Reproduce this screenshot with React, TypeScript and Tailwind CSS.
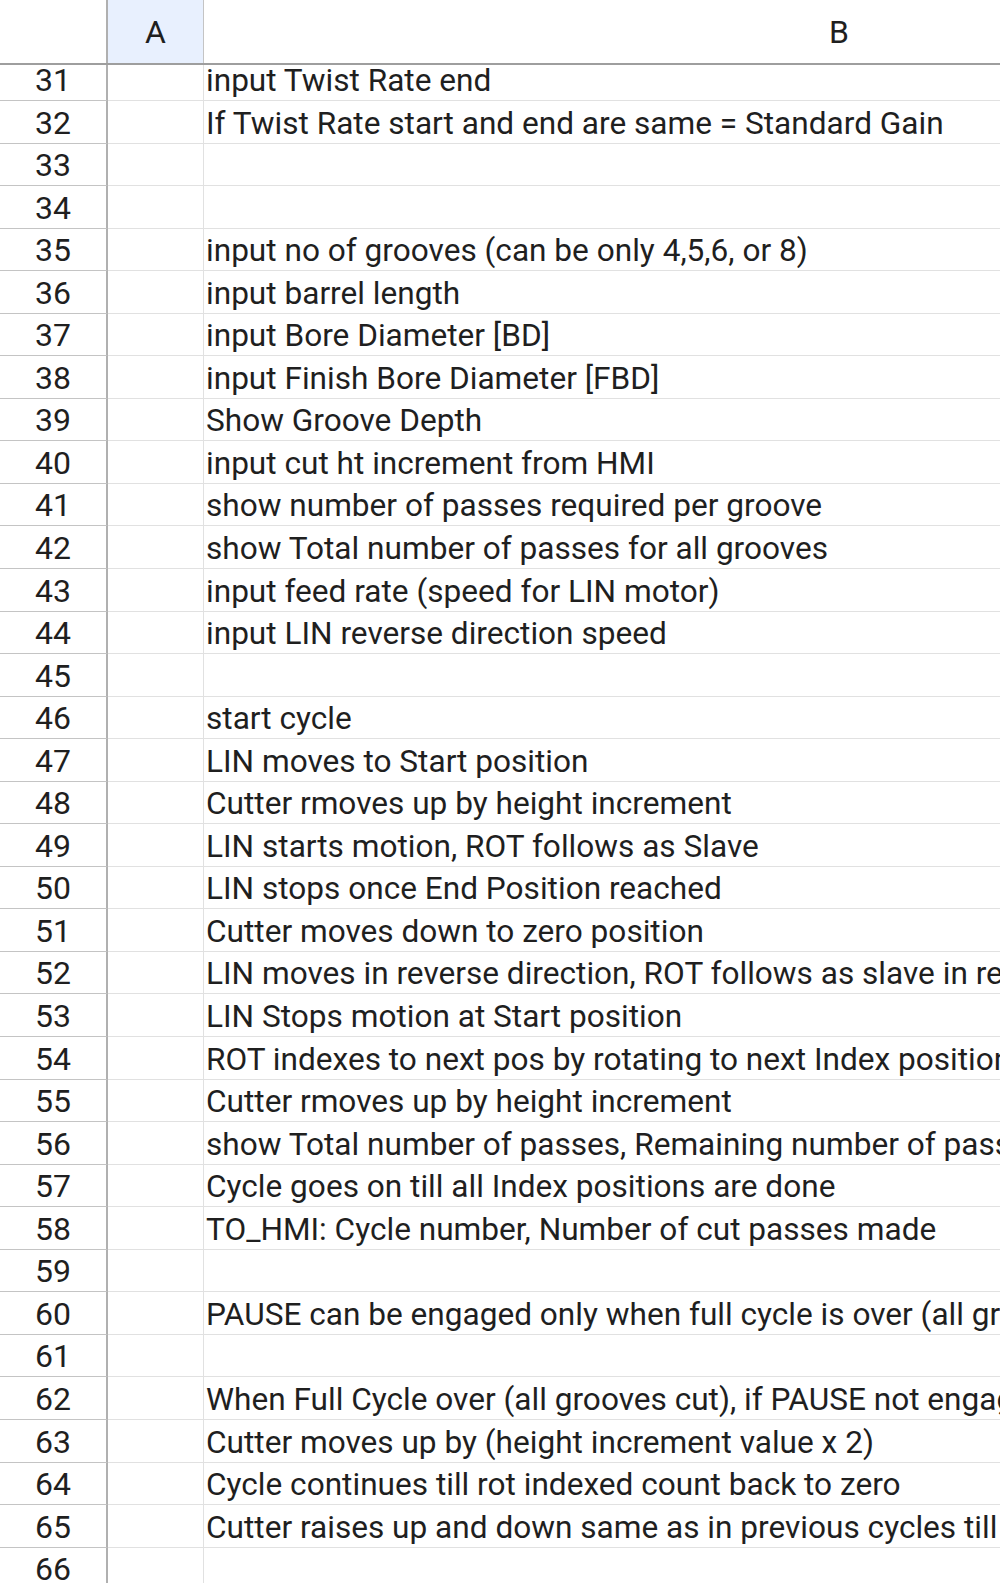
import React from 'react';

const rows: [number, string][] = [
  [31, 'input Twist Rate end'],
  [32, 'If Twist Rate start and end are same = Standard Gain'],
  [33, ''],
  [34, ''],
  [35, 'input no of grooves (can be only 4,5,6, or 8)'],
  [36, 'input barrel length'],
  [37, 'input Bore Diameter [BD]'],
  [38, 'input Finish Bore Diameter [FBD]'],
  [39, 'Show Groove Depth'],
  [40, 'input cut ht increment from HMI'],
  [41, 'show number of passes required per groove'],
  [42, 'show Total number of passes for all grooves'],
  [43, 'input feed rate (speed for LIN motor)'],
  [44, 'input LIN reverse direction speed'],
  [45, ''],
  [46, 'start cycle'],
  [47, 'LIN moves to Start position'],
  [48, 'Cutter rmoves up by height increment'],
  [49, 'LIN starts motion, ROT follows as Slave'],
  [50, 'LIN stops once End Position reached'],
  [51, 'Cutter moves down to zero position'],
  [52, 'LIN moves in reverse direction, ROT follows as slave in reverse'],
  [53, 'LIN Stops motion at Start position'],
  [54, 'ROT indexes to next pos by rotating to next Index position'],
  [55, 'Cutter rmoves up by height increment'],
  [56, 'show Total number of passes, Remaining number of passes'],
  [57, 'Cycle goes on till all Index positions are done'],
  [58, 'TO_HMI: Cycle number, Number of cut passes made'],
  [59, ''],
  [60, 'PAUSE can be engaged only when full cycle is over (all grooves cut)'],
  [61, ''],
  [62, 'When Full Cycle over (all grooves cut), if PAUSE not engaged'],
  [63, 'Cutter moves up by (height increment value x 2)'],
  [64, 'Cycle continues till rot indexed count back to zero'],
  [65, 'Cutter raises up and down same as in previous cycles till'],
  [66, ''],
];

// grid sits inside a viewport, column B runs past the right edge like a scrolled sheet
function Row({ n, text, first }: { n: number; text: string; first?: boolean }) {
  return (
    <div className={`flex shrink-0 ${first ? 'h-[36px]' : 'h-[42.55px]'}`}>
      <div className="w-[108px] shrink-0 flex items-end justify-center pb-[1px] border-b border-[#c4c4c4] border-r-2 border-r-[#b0b0b0] text-[32px] leading-[38px] text-[#1f1f1f]">
        {n}
      </div>
      <div className="w-[96px] shrink-0 border-b border-r border-[#e1e1e1]" />
      <div className="w-[1270px] shrink-0 flex items-end pl-[2px] border-b border-[#e1e1e1] whitespace-nowrap text-[31.6px] leading-[38px] text-[#1f1f1f]">
        {text}
      </div>
    </div>
  );
}

export default function App() {
  return (
    <div
      className="w-[1000px] h-[1583px] overflow-hidden bg-white flex flex-col"
      style={{ fontFamily: 'Roboto, "Noto Sans", sans-serif' }}
    >
      <div className="flex h-[65px] shrink-0 border-b-2 border-[#9e9e9e] w-max">
        <div className="w-[108px] shrink-0 border-r-2 border-[#b0b0b0]" />
        <div className="w-[96px] shrink-0 bg-[#e8f0fe] border-r border-[#c4c4c4] flex items-center justify-center text-[32px] text-[#1f1f1f]">
          A
        </div>
        <div className="w-[1270px] shrink-0 flex items-center justify-center text-[32px] text-[#1f1f1f]">B</div>
      </div>
      {rows.map(([n, t], i) => (
        <Row key={n} n={n} text={t} first={i === 0} />
      ))}
    </div>
  );
}
